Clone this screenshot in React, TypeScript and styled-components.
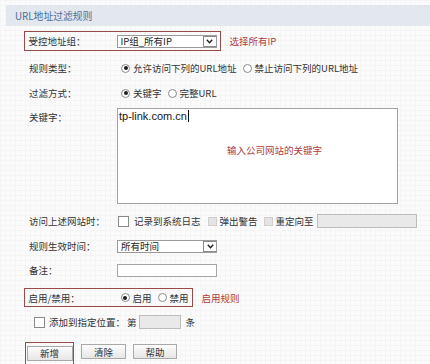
import styled, { createGlobalStyle } from "styled-components";

const GlobalStyle = createGlobalStyle`
  body {
    margin: 0;
    font-family: "Noto Sans CJK SC", "Liberation Sans", sans-serif;
    font-size: 9.5px;
    color: #333;
  }
`;

const Page = styled.div`
  width: 430px;
  height: 364px;
  overflow: hidden;
  padding-top: 5px;
  box-sizing: border-box;
  background-color: #fbfbfb;
  background-image: linear-gradient(#f5f5f5 1px, transparent 1px),
    linear-gradient(90deg, #f5f5f5 1px, transparent 1px);
  background-size: 5px 5px;
`;

const Header = styled.div`
  margin-left: 6px;
  height: 21px;
  display: flex;
  align-items: center;
  padding-left: 9px;
  background: #e3e8ee;
  color: #4d6c98;
  font-size: 9.8px;
`;

const Form = styled.div`
  display: flex;
  flex-direction: column;
  padding-left: 24px;
`;

const Line = styled.div<{ $h: number; $mt: number }>`
  display: flex;
  align-items: center;
  height: ${({ $h }) => $h}px;
  margin-top: ${({ $mt }) => $mt}px;
`;

const Field = styled.div<{ $boxed?: boolean; $indent?: number; $top?: boolean }>`
  display: flex;
  align-items: ${({ $top }) => ($top ? "flex-start" : "center")};
  height: 100%;
  box-sizing: border-box;
  padding-left: ${({ $boxed, $indent }) =>
    $indent !== undefined ? $indent : $boxed ? 3.5 : 5}px;
  padding-right: ${({ $boxed }) => ($boxed ? 3 : 0)}px;
  border: ${({ $boxed }) => ($boxed ? "1.5px solid #9b4a4a" : "none")};
`;

const Label = styled.span<{ $lh?: number }>`
  width: 88px;
  flex-shrink: 0;
  ${({ $lh }) => $lh && `line-height: ${$lh}px;`}
`;

const Note = styled.span`
  margin-left: 9px;
  color: #b03b3b;
`;

const Select = styled.div`
  width: 100px;
  height: 13px;
  box-sizing: border-box;
  border: 1px solid #9a9a9a;
  background: #fff;
  display: flex;
  align-items: center;
  justify-content: space-between;
  padding-left: 3px;
  color: #222;
`;

const Arrow = styled.span`
  width: 13px;
  height: 11px;
  box-sizing: border-box;
  border: 1px solid #8c8c8c;
  border-right: none;
  display: flex;
  align-items: center;
  justify-content: center;
  background: #fff;

  svg {
    width: 7px;
    height: 5px;
  }
`;

const Options = styled.div`
  display: flex;
  align-items: center;
  gap: 6px;
  margin-left: 4px;
`;

const Option = styled.span`
  display: flex;
  align-items: center;
  gap: 3px;
`;

const Radio = styled.span<{ $on?: boolean }>`
  width: 9px;
  height: 9px;
  box-sizing: border-box;
  border: 1px solid #8a8a8a;
  border-radius: 50%;
  background: #fff;
  display: flex;
  align-items: center;
  justify-content: center;

  &::after {
    content: "";
    width: 4px;
    height: 4px;
    border-radius: 50%;
    background: ${({ $on }) => ($on ? "#1e1e1e" : "transparent")};
  }
`;

const Check = styled.span<{ $off?: boolean; $ml?: number; $mr?: number }>`
  width: ${({ $off }) => ($off ? 9 : 11)}px;
  height: ${({ $off }) => ($off ? 9 : 11)}px;
  box-sizing: border-box;
  border: 1px solid ${({ $off }) => ($off ? "#cfcfcf" : "#8a8a8a")};
  background: ${({ $off }) => ($off ? "#e4e4e4" : "#fff")};
  margin-left: ${({ $ml }) => $ml ?? 0}px;
  margin-right: ${({ $mr }) => $mr ?? 0}px;
  flex-shrink: 0;
`;

const TextInput = styled.div<{ $w: number; $off?: boolean; $ml?: number }>`
  width: ${({ $w }) => $w}px;
  height: ${({ $off }) => ($off ? 14 : 13)}px;
  box-sizing: border-box;
  margin-left: ${({ $ml }) => $ml ?? 0}px;
  border: 1px solid ${({ $off }) => ($off ? "#bcbcbc" : "#a6a6a6")};
  background: ${({ $off }) => ($off ? "#e9e9e9" : "#fff")};
`;

const Gap = styled.span<{ $w: number }>`
  display: inline-block;
  width: ${({ $w }) => $w}px;
`;

const TextArea = styled.div`
  position: relative;
  width: 281px;
  height: 96px;
  box-sizing: border-box;
  border: 1px solid #a3a3a3;
  background: #fff;
  padding: 1px 1px;
  font-family: "Liberation Sans", Arial, sans-serif;
  font-size: 11px;
  color: #161616;
  line-height: 13px;
`;

const Caret = styled.span`
  display: inline-block;
  width: 1px;
  height: 12px;
  margin-left: 1px;
  vertical-align: -2px;
  background: #111;
`;

const AreaNote = styled.span`
  position: absolute;
  left: 109px;
  top: 35px;
  font-family: "Noto Sans CJK SC", sans-serif;
  font-size: 9.5px;
  color: #b03b3b;
`;

const Buttons = styled.div`
  display: flex;
  align-items: flex-start;
  gap: 7px;
  margin-top: 8px;
  padding-left: 1px;
`;

const ButtonBox = styled.div`
  border: 1.5px solid #9b4a4a;
  padding: 0.5px 0.5px 6px;
`;

const Button = styled.button<{ $w: number }>`
  width: ${({ $w }) => $w}px;
  height: 15px;
  padding: 0;
  margin-top: 2px;
  box-sizing: border-box;
  border: 1px solid #a9a9a9;
  background: linear-gradient(#fcfcfc, #e6e6e6);
  font-family: "Noto Sans CJK SC", sans-serif;
  font-size: 9.5px;
  color: #333;
  display: flex;
  align-items: center;
  justify-content: center;
`;

function Chevron() {
  return (
    <svg viewBox="0 0 7 5" fill="none">
      <path d="M0.8 0.8L3.5 3.8L6.2 0.8" stroke="#222" strokeWidth="1.4" />
    </svg>
  );
}

function App() {
  return (
    <>
      <GlobalStyle />
      <Page>
        <Header>URL地址过滤规则</Header>
        <Form>
          <Line $h={20} $mt={5}>
            <Field $boxed>
              <Label>受控地址组：</Label>
              <Select>
                IP组_所有IP
                <Arrow>
                  <Chevron />
                </Arrow>
              </Select>
            </Field>
            <Note>选择所有IP</Note>
          </Line>

          <Line $h={24} $mt={5}>
            <Field>
              <Label>规则类型：</Label>
              <Options>
                <Option>
                  <Radio $on />
                  允许访问下列的URL地址
                </Option>
                <Option>
                  <Radio />
                  禁止访问下列的URL地址
                </Option>
              </Options>
            </Field>
          </Line>

          <Line $h={24} $mt={1}>
            <Field>
              <Label>过滤方式：</Label>
              <Options>
                <Option>
                  <Radio $on />
                  关键字
                </Option>
                <Option>
                  <Radio />
                  完整URL
                </Option>
              </Options>
            </Field>
          </Line>

          <Line $h={96} $mt={3}>
            <Field $top>
              <Label $lh={18}>关键字：</Label>
              <TextArea>
                tp-link.com.cn
                <Caret />
                <AreaNote>输入公司网站的关键字</AreaNote>
              </TextArea>
            </Field>
          </Line>

          <Line $h={24} $mt={5}>
            <Field>
              <Label>访问上述网站时：</Label>
              <Check $ml={1} $mr={5} />
              记录到系统日志
              <Check $off $ml={7} $mr={3} />
              弹出警告
              <Check $off $ml={6} $mr={3} />
              重定向至
              <TextInput $w={100} $off $ml={3} />
            </Field>
          </Line>

          <Line $h={24} $mt={1}>
            <Field>
              <Label>规则生效时间：</Label>
              <Select>
                所有时间
                <Arrow>
                  <Chevron />
                </Arrow>
              </Select>
            </Field>
          </Line>

          <Line $h={24} $mt={0}>
            <Field>
              <Label>备注：</Label>
              <TextInput $w={100} />
            </Field>
          </Line>

          <Line $h={19} $mt={6}>
            <Field $boxed>
              <Label>启用/禁用：</Label>
              <Options>
                <Option>
                  <Radio $on />
                  启用
                </Option>
                <Option>
                  <Radio />
                  禁用
                </Option>
              </Options>
            </Field>
            <Note>启用规则</Note>
          </Line>

          <Line $h={24} $mt={3}>
            <Field $indent={10}>
              <Check $mr={4} />
              添加到指定位置：
              <Gap $w={2} />第
              <TextInput $w={42} $off $ml={2} />
              <Gap $w={5} />条
            </Field>
          </Line>

          <Buttons>
            <ButtonBox>
              <Button $w={46}>新增</Button>
            </ButtonBox>
            <Button $w={45}>清除</Button>
            <Button $w={44}>帮助</Button>
          </Buttons>
        </Form>
      </Page>
    </>
  );
}

export default App;
